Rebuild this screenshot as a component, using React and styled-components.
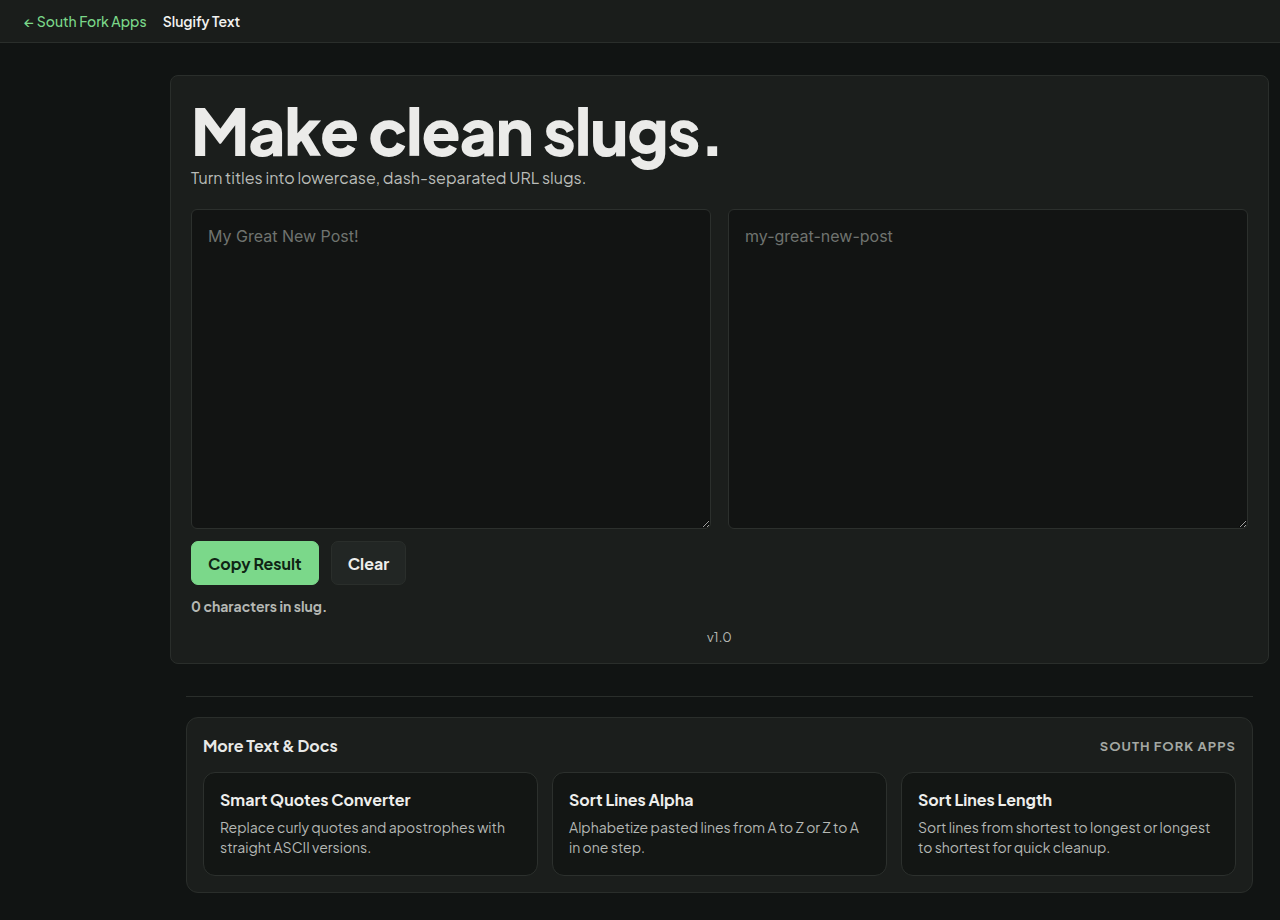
import React from 'react';
import styled, { createGlobalStyle } from 'styled-components';

const Global = createGlobalStyle`
  * { box-sizing: border-box; }
  body {
    margin: 0;
    background: #111413;
    color: #e8e9e7;
    font-family: "Plus Jakarta Sans", Inter, "Noto Sans", sans-serif;
  }
`;

const Header = styled.header`
  height: 43px;
  display: flex;
  align-items: center;
  gap: 16px;
  padding: 0 24px;
  background: #1a1d1b;
  border-bottom: 1px solid #2a2e2b;
  font-size: 14px;
`;

const BackLink = styled.a`
  color: #7bd88a;
  text-decoration: none;
  font-weight: 500;
`;

const Crumb = styled.span`
  color: #f2f2f0;
  font-weight: 600;
`;

const Main = styled.main`
  padding: 32px 11px 32px 170px;
`;

const Card = styled.section`
  background: #1b1e1c;
  border: 1px solid #2a2e2b;
  border-radius: 8px;
  padding: 18px 20px 18px;
`;

const Title = styled.h1`
  margin: 0;
  font-size: 64px;
  font-weight: 800;
  letter-spacing: -1.2px;
  line-height: 72px;
  color: #ebebe9;
`;

const Sub = styled.p`
  margin: 0 0 19px;
  font-size: 16px;
  line-height: 24px;
  color: #b9bcb8;
`;

const Panes = styled.div`
  display: grid;
  grid-template-columns: 1fr 1fr;
  gap: 17px;
`;

const Area = styled.textarea`
  height: 320px;
  resize: vertical;
  background: #121413;
  border: 1px solid #2c302d;
  border-radius: 6px;
  padding: 16px 16px;
  color: #e8e9e7;
  font: 16px Inter, "Noto Sans", sans-serif;
  &::placeholder { color: #6f736f; }
`;

const Actions = styled.div`
  display: flex;
  gap: 12px;
  margin-top: 12px;
`;

const Button = styled.button`
  height: 44px;
  padding: 0 16px;
  border-radius: 7px;
  font: 700 16px "Plus Jakarta Sans", Inter, sans-serif;
  border: 1px solid ${p => (p.$primary ? '#7bd88a' : '#2a2e2b')};
  background: ${p => (p.$primary ? '#7bd88a' : '#222624')};
  color: ${p => (p.$primary ? '#0f2414' : '#eeeeec')};
`;

const Count = styled.p`
  margin: 12px 0 0;
  font-size: 14px;
  font-weight: 700;
  color: #b5b8b4;
`;

const Version = styled.p`
  margin: 14px 0 0;
  text-align: center;
  font-size: 13px;
  color: #b5b8b4;
`;

const Footer = styled.footer`
  margin: 0 27px 0 186px;
  border-top: 1px solid #2a2e2b;
  padding-top: 20px;
`;

const Related = styled.div`
  background: #1b1e1c;
  border: 1px solid #2a2e2b;
  border-radius: 12px;
  padding: 17px 16px 16px;
`;

const RelHead = styled.div`
  display: flex;
  justify-content: space-between;
  align-items: center;
  margin-bottom: 16px;
`;

const RelTitle = styled.h2`
  margin: 0;
  font-size: 16px;
  font-weight: 700;
`;

const Brand = styled.span`
  font-size: 13px;
  font-weight: 700;
  letter-spacing: 1px;
  color: #a4a8a3;
`;

const Grid = styled.div`
  display: grid;
  grid-template-columns: repeat(3, 1fr);
  gap: 14px;
`;

const Tool = styled.a`
  display: block;
  background: #131614;
  border: 1px solid #2c302d;
  border-radius: 12px;
  padding: 16px 16px 18px;
  text-decoration: none;
`;

const ToolName = styled.h3`
  margin: 0 0 7px;
  font-size: 16px;
  font-weight: 700;
  color: #eeeeec;
`;

const ToolDesc = styled.p`
  margin: 0;
  font-size: 14px;
  line-height: 20px;
  color: #b5b8b4;
  padding-right: 8px;
`;

const tools = [
  ['Smart Quotes Converter', 'Replace curly quotes and apostrophes with straight ASCII versions.'],
  ['Sort Lines Alpha', 'Alphabetize pasted lines from A to Z or Z to A in one step.'],
  ['Sort Lines Length', 'Sort lines from shortest to longest or longest to shortest for quick cleanup.'],
];

export default function App() {
  return (
    <>
      <Global />
      <Header>
        <BackLink href="#">← South Fork Apps</BackLink>
        <Crumb>Slugify Text</Crumb>
      </Header>
      <Main>
        <Card>
          <Title>Make clean slugs.</Title>
          <Sub>Turn titles into lowercase, dash-separated URL slugs.</Sub>
          <Panes>
            <Area placeholder="My Great New Post!" />
            <Area placeholder="my-great-new-post" readOnly />
          </Panes>
          <Actions>
            <Button $primary>Copy Result</Button>
            <Button>Clear</Button>
          </Actions>
          <Count>0 characters in slug.</Count>
          <Version>v1.0</Version>
        </Card>
      </Main>
      <Footer>
        <Related>
          <RelHead>
            <RelTitle>More Text &amp; Docs</RelTitle>
            <Brand>SOUTH FORK APPS</Brand>
          </RelHead>
          <Grid>
            {tools.map(([n, d]) => (
              <Tool key={n} href="#">
                <ToolName>{n}</ToolName>
                <ToolDesc>{d}</ToolDesc>
              </Tool>
            ))}
          </Grid>
        </Related>
      </Footer>
    </>
  );
}
